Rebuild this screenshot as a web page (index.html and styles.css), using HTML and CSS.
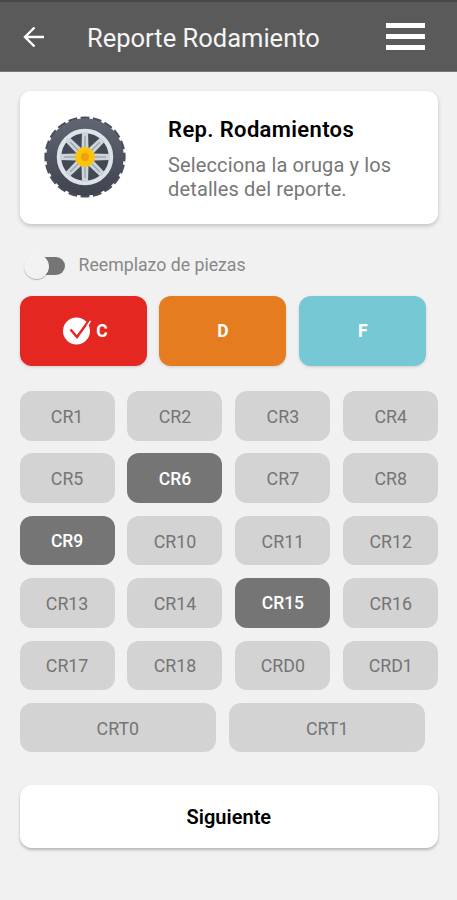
FILE: index.html
```html
<!DOCTYPE html>
<html lang="es">
<head>
  <meta charset="UTF-8" />
  <meta name="viewport" content="width=device-width, initial-scale=1.0"/>
  <title>Reporte Rodamiento</title>
  <link rel="stylesheet" href="styles.css">
</head>
<body>

  <header class="topbar">
    <svg class="back" viewBox="0 0 22 22">
      <path d="M21 11H2M11.500 1.500L2 11l9.500 9.500" />
    </svg>
    <h1>Reporte Rodamiento</h1>
    <div class="menu"><span></span><span></span><span></span></div>
  </header>

  <main>
    <section class="card">
      <svg class="tire" viewBox="-41 -41 82 82">
        <defs>
          <linearGradient id="rubber" x1="0" y1="0" x2="0" y2="1">
            <stop offset="0" stop-color="#626673" />
            <stop offset="1" stop-color="#3f434e" />
          </linearGradient>
          <g id="spoke">
            <path d="M-3.500 -8L-3 -25H3L3.500 -8Z" fill="#ccd3d9" />
            <path d="M0 -8V-21" stroke="#939da6" stroke-width="1.200" />
          </g>
        </defs>
        <circle r="38.800" pathLength="20" fill="none" stroke="#4b4f5b" stroke-width="3.600" stroke-dasharray=".72 .28" stroke-dashoffset=".36" />
        <circle r="38.800" fill="url(#rubber)" />
        <circle r="26" fill="#424954" stroke="#dde3e8" stroke-width="4.500" />
        <use href="#spoke" />
        <use href="#spoke" transform="rotate(45)" />
        <use href="#spoke" transform="rotate(90)" />
        <use href="#spoke" transform="rotate(135)" />
        <use href="#spoke" transform="rotate(180)" />
        <use href="#spoke" transform="rotate(225)" />
        <use href="#spoke" transform="rotate(270)" />
        <use href="#spoke" transform="rotate(315)" />
        <circle r="10" fill="#fcc30b" />
        <circle r="4" fill="#f0a00c" />
      </svg>
      <div class="card-text">
        <h2>Rep. Rodamientos</h2>
        <p>Selecciona la oruga y los detalles del reporte.</p>
      </div>
    </section>

    <div class="switch-row">
      <div class="switch"><div class="thumb"></div></div>
      <span>Reemplazo de piezas</span>
    </div>

    <div class="types">
      <button class="type red">
        <svg class="check" viewBox="0 0 28 28">
          <circle cx="13.500" cy="14" r="13.500" fill="#fff" />
          <path d="M7.500 12.500l6.500 7.500L26 3.500" fill="none" stroke="#e42720" stroke-width="2.400" />
          <path d="M24 9.500L27.500 4" stroke="#fff" stroke-width="1.500" />
        </svg>
        C
      </button>
      <button class="type orange">D</button>
      <button class="type blue">F</button>
    </div>

    <div class="parts">
      <button>CR1</button>
      <button>CR2</button>
      <button>CR3</button>
      <button>CR4</button>

      <button>CR5</button>
      <button class="selected">CR6</button>
      <button>CR7</button>
      <button>CR8</button>

      <button class="selected">CR9</button>
      <button>CR10</button>
      <button>CR11</button>
      <button>CR12</button>

      <button>CR13</button>
      <button>CR14</button>
      <button class="selected">CR15</button>
      <button>CR16</button>

      <button>CR17</button>
      <button>CR18</button>
      <button>CRD0</button>
      <button>CRD1</button>
    </div>

    <div class="parts wide">
      <button>CRT0</button>
      <button>CRT1</button>
    </div>

    <button class="next">Siguiente</button>
  </main>

</body>
</html>
```
FILE: styles.css
```css
* {
  box-sizing: border-box;
}

body {
  font-family: Roboto, sans-serif;
  background-color: #f1f1f1;
  margin: 0;
}

h1, h2, p {
  margin: 0;
}

button {
  font-family: inherit;
  border: none;
  padding: 0;
  cursor: pointer;
}

.topbar {
  display: flex;
  align-items: center;
  height: 72px;
  padding: 0 32px 0 23px;
  background-color: #5a5a5a;
  border-top: 2px solid #484848;
  border-bottom: 1px solid #777;
}

.back {
  width: 22px;
  height: 22px;
  fill: none;
  stroke: #fff;
  stroke-width: 2.4;
}

.topbar h1 {
  flex: 1;
  margin-left: 42px;
  padding-top: 2px;
  color: #f5f5f5;
  font-size: 25.5px;
  font-weight: 400;
  white-space: nowrap;
}

.menu {
  display: flex;
  flex-direction: column;
  gap: 6px;
  width: 39px;
}

.menu span {
  height: 5px;
  background-color: #fff;
}

main {
  padding: 19px 18.9px 40px 19.6px;
}

.card {
  display: flex;
  align-items: center;
  height: 132.5px;
  padding-left: 24.5px;
  background-color: #fff;
  border-radius: 11px;
  box-shadow: 0 2px 4px rgba(0,0,0,0.2);
}

.tire {
  width: 82px;
  height: 82px;
}

.card-text {
  width: 240px;
  margin-left: 42px;
  padding-top: 3px;
}

.card-text h2 {
  font-size: 22px;
  font-weight: 600;
  line-height: 26px;
  letter-spacing: 0.35px;
  margin-bottom: 10px;
}

.card-text p {
  color: #777;
  font-size: 20px;
  line-height: 24px;
  letter-spacing: 0.12px;
}

.switch-row {
  display: flex;
  align-items: center;
  height: 26px;
  margin-top: 29px;
  color: #888;
  font-size: 17.7px;
}

.switch-row span {
  padding-bottom: 2px;
}

.switch {
  display: flex;
  align-items: center;
  width: 37px;
  height: 18px;
  margin: 1px 14px 0 8px;
  background-color: #757575;
  border-radius: 9px;
}

.thumb {
  flex: none;
  width: 25px;
  height: 25px;
  margin-left: -4px;
  border-radius: 50%;
  background-color: #f2f2f2;
  box-shadow: 0 1px 1px rgba(0,0,0,0.25);
}

.types {
  display: flex;
  gap: 12.8px;
  margin-top: 17.5px;
}

.type {
  display: flex;
  align-items: center;
  justify-content: center;
  gap: 5px;
  width: 127px;
  height: 69.5px;
  border-radius: 12px;
  box-shadow: 0 1px 3px rgba(0,0,0,0.15);
  color: #fff;
  font-size: 17.5px;
  font-weight: 700;
}

.red {
  padding-left: 5px;
  background-color: #e42720;
}

.orange {
  background-color: #e67c20;
}

.blue {
  background-color: #76c8d5;
}

.check {
  width: 28px;
  height: 28px;
}

.parts {
  display: grid;
  grid-template-columns: repeat(4, 95px);
  gap: 12.9px;
  margin-top: 25.5px;
}

.parts button {
  height: 49.5px;
  padding-top: 1px;
  border-radius: 12px;
  background-color: #d3d3d3;
  color: #757575;
  font-size: 17.8px;
}

.parts .selected {
  background-color: #757575;
  color: #fff;
  font-size: 17.5px;
  font-weight: 500;
}

.wide {
  grid-template-columns: repeat(2, 196.5px);
  margin-top: 12.9px;
}

.next {
  width: 100%;
  height: 63.5px;
  margin-top: 32.5px;
  border-radius: 12px;
  background-color: #fff;
  box-shadow: 0 2px 3px rgba(0,0,0,0.25);
  color: #000;
  font-size: 20px;
  font-weight: 600;
}
```
